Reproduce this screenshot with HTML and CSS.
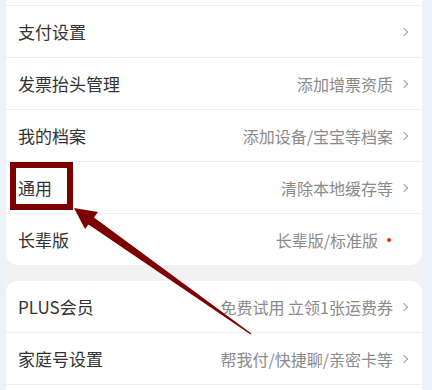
FILE: index.html
```html
<!DOCTYPE html>
<html lang="zh-CN">
<head>
  <meta charset="UTF-8" />
  <meta name="viewport" content="width=device-width, initial-scale=1.0"/>
  <title>设置</title>
  <link rel="stylesheet" href="styles.css">
</head>
<body>
  <div class="page">
    <!-- Account card -->
    <div class="card card-first">
      <div class="row">
        <span class="label">支付设置</span>
        <span class="chevron"></span>
      </div>
      <div class="row">
        <span class="label">发票抬头管理</span>
        <span class="value">添加增票资质</span>
        <span class="chevron"></span>
      </div>
      <div class="row">
        <span class="label">我的档案</span>
        <span class="value">添加设备/宝宝等档案</span>
        <span class="chevron"></span>
      </div>
      <div class="row">
        <span class="label">通用</span>
        <span class="value">清除本地缓存等</span>
        <span class="chevron"></span>
      </div>
      <div class="row">
        <span class="label">长辈版</span>
        <span class="value">长辈版/标准版</span>
        <span class="dot"></span>
      </div>
    </div>

    <!-- Member card -->
    <div class="card card-last">
      <div class="row">
        <span class="label">PLUS会员</span>
        <span class="value">免费试用 立领1张运费券</span>
        <span class="chevron"></span>
      </div>
      <div class="row">
        <span class="label">家庭号设置</span>
        <span class="value">帮我付/快捷聊/亲密卡等</span>
        <span class="chevron"></span>
      </div>
    </div>
  </div>

  <!-- Annotation drawn over the screenshot -->
  <svg class="annotation" width="432" height="390" viewBox="0 0 432 390">
    <rect x="13" y="165" width="57" height="42" fill="none" stroke="#7d0000" stroke-width="6"/>
    <polygon fill="#7d0000" points="74,208 98,212 94,217.5 251.4,333.5 250.6,334.5 88.5,224.5 85,229"/>
  </svg>
</body>
</html>
```

FILE: styles.css
```css
body {
  margin: 0;
  padding: 0;
  background-color: #edf1fa;
  font-family: "Noto Sans CJK SC", "Noto Sans", sans-serif;
  overflow: hidden;
  height: 390px;
  position: relative;
}

.page {
  margin: 0 10px 0 6px;
  background-color: #f2f2f2;
  display: flex;
  flex-direction: column;
  gap: 16px;
  height: 390px;
}

.card {
  background-color: #ffffff;
  border-radius: 12px;
}

.card-first {
  margin-top: -12px;
  padding-top: 17px;
}

.card-last {
  flex: 1;
  border-radius: 12px 12px 0 0;
}

.row {
  height: 51px;
  display: flex;
  align-items: center;
  padding: 0 12px 0 12px;
  border-top: 1px solid #eeeeee;
}

.card-last .row:first-child {
  border-top: none;
}

.card-last .row:last-child {
  border-bottom: 1px solid #eeeeee;
}

.label {
  font-size: 17px;
  color: #333333;
  flex: 1;
  white-space: nowrap;
}

.value {
  font-size: 16px;
  color: #8a8a8a;
  white-space: nowrap;
  margin-right: 8px;
}

.chevron {
  width: 5px;
  height: 5px;
  border-top: 1px solid #a0a0a0;
  border-right: 1px solid #a0a0a0;
  transform: rotate(45deg);
  margin-right: 3px;
}

.dot {
  width: 4px;
  height: 4px;
  border-radius: 50%;
  background-color: #f2270c;
  margin-right: 19px;
  margin-left: 1px;
}

.annotation {
  position: absolute;
  left: 0;
  top: 0;
  pointer-events: none;
}
```
